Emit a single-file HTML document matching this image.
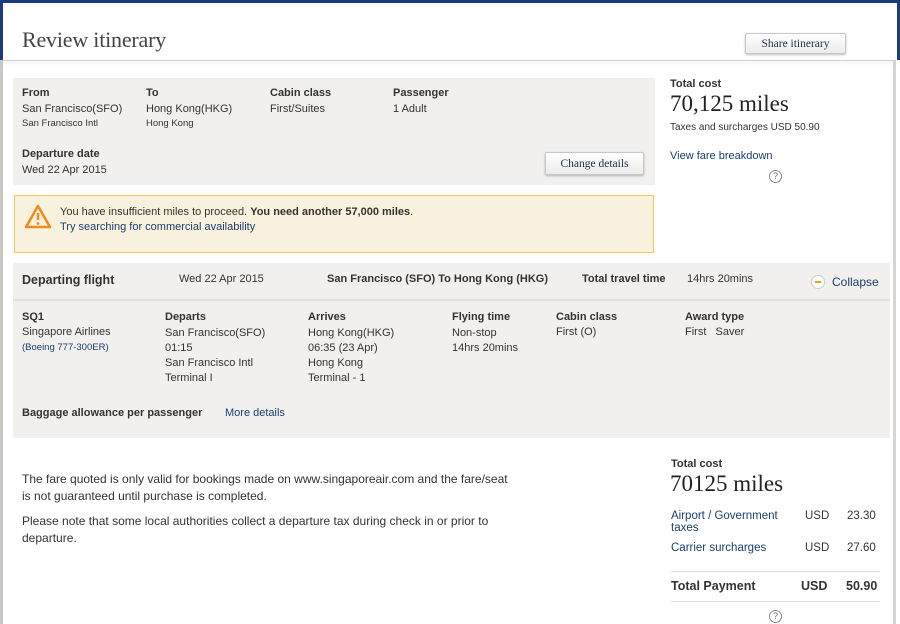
<!DOCTYPE html>
<html><head><style>
*{margin:0;padding:0;box-sizing:border-box}
body{width:900px;height:624px;overflow:hidden;background:#fff;font-family:"Liberation Sans",sans-serif;font-size:11px;color:#333;position:relative}
.a{position:absolute;white-space:nowrap}
.b{font-weight:bold}
.l{color:#1c3d6e}
.serif{font-family:"Liberation Serif",serif}
.btn{position:absolute;border:1px solid #c8c8c8;border-radius:2px;background:linear-gradient(#fff,#ececec);box-shadow:0 1px 2px rgba(0,0,0,.25);font-family:"Liberation Serif",serif;font-size:11.5px;color:#1f2d48;text-align:center}
</style></head><body>
<div class="a" style="left:0;top:0;width:900px;height:3px;background:#1b3a80"></div>
<div class="a" style="left:0;top:0;width:3px;height:60px;background:#1b3a80"></div>
<div class="a" style="left:897px;top:0;width:3px;height:60px;background:#1b3a80"></div>
<div class="a" style="left:0;top:60px;width:3px;height:564px;background:#c9c7c4"></div>
<div class="a" style="left:893px;top:60px;width:3px;height:564px;background:#d6d5d3"></div>
<div class="a" style="left:3px;top:60px;width:890px;height:1px;background:#cfcfcf;box-shadow:0 2px 3px rgba(0,0,0,.12)"></div>
<div class="a serif" style="left:22px;top:27px;font-size:22px;color:#444;letter-spacing:-0.2px">Review itinerary</div>
<div class="btn" style="left:745px;top:33px;width:101px;height:21px;line-height:20px">Share itinerary</div>

<div class="a" style="left:13px;top:78px;width:642px;height:107px;background:#f1f0ee"></div>
<div class="a b" style="left:22px;top:87px">From</div>
<div class="a" style="left:22px;top:103px">San Francisco(SFO)</div>
<div class="a" style="left:22px;top:118px;font-size:9.5px">San Francisco Intl</div>
<div class="a b" style="left:146px;top:87px">To</div>
<div class="a" style="left:146px;top:103px">Hong Kong(HKG)</div>
<div class="a" style="left:146px;top:118px;font-size:9.5px">Hong Kong</div>
<div class="a b" style="left:270px;top:87px">Cabin class</div>
<div class="a" style="left:270px;top:103px">First/Suites</div>
<div class="a b" style="left:393px;top:87px">Passenger</div>
<div class="a" style="left:393px;top:103px">1 Adult</div>
<div class="a b" style="left:22px;top:148px">Departure date</div>
<div class="a" style="left:22px;top:164px">Wed 22 Apr 2015</div>
<div class="btn" style="left:545px;top:152px;width:99px;height:23px;line-height:22px">Change details</div>

<div class="a" style="left:14px;top:195px;width:640px;height:58px;background:#f8f1dd;border:1px solid #f4c660"></div>
<svg class="a" style="left:24px;top:204px" width="28" height="26" viewBox="0 0 28 26"><path d="M14 2 L26 23 H2 Z" fill="none" stroke="#f08a1c" stroke-width="2.5" stroke-linejoin="round"/><path d="M14 9 V16" stroke="#f08a1c" stroke-width="2.5"/><circle cx="14" cy="19.5" r="1.4" fill="#f08a1c"/></svg>
<div class="a" style="left:60px;top:206px">You have insufficient miles to proceed. <b>You need another 57,000 miles</b>.</div>
<div class="a l" style="left:60px;top:221px">Try searching for commercial availability</div>

<div class="a b" style="left:670px;top:78px">Total cost</div>
<div class="a serif" style="left:670px;top:91px;font-size:23px;color:#222">70,125 miles</div>
<div class="a" style="left:670px;top:122px;font-size:10px">Taxes and surcharges USD 50.90</div>
<div class="a l" style="left:670px;top:150px">View fare breakdown</div>
<div class="a" style="left:769px;top:170px;width:13px;height:13px;border:1px solid #888;border-radius:50%;font-size:9px;line-height:11px;text-align:center;color:#666">?</div>

<div class="a" style="left:13px;top:263px;width:877px;height:175px;background:#f1f0ee"></div>
<div class="a" style="left:13px;top:299px;width:877px;height:2px;background:#e2e1df"></div>
<div class="a b" style="left:22px;top:273px;font-size:12.5px">Departing flight</div>
<div class="a" style="left:179px;top:273px">Wed 22 Apr 2015</div>
<div class="a b" style="left:327px;top:273px">San Francisco (SFO) To Hong Kong (HKG)</div>
<div class="a b" style="left:582px;top:273px">Total travel time</div>
<div class="a" style="left:687px;top:273px">14hrs 20mins</div>
<div class="a" style="left:811px;top:275px;width:14px;height:14px;border-radius:50%;background:#fff;border:1px solid #ccc"><div style="position:absolute;left:3px;top:5px;width:6px;height:2px;background:#f39c12"></div></div>
<div class="a l" style="left:832px;top:275px;font-size:12px">Collapse</div>

<div class="a b" style="left:22px;top:311px">SQ1</div>
<div class="a" style="left:22px;top:326px">Singapore Airlines</div>
<div class="a l" style="left:22px;top:342px;font-size:9.5px">(Boeing 777-300ER)</div>
<div class="a b" style="left:165px;top:311px">Departs</div>
<div class="a" style="left:165px;top:326px;line-height:15px">San Francisco(SFO)<br>01:15<br>San Francisco Intl<br>Terminal I</div>
<div class="a b" style="left:308px;top:311px">Arrives</div>
<div class="a" style="left:308px;top:326px;line-height:15px">Hong Kong(HKG)<br>06:35 (23 Apr)<br>Hong Kong<br>Terminal - 1</div>
<div class="a b" style="left:452px;top:311px">Flying time</div>
<div class="a" style="left:452px;top:326px;line-height:15px">Non-stop<br>14hrs 20mins</div>
<div class="a b" style="left:556px;top:311px">Cabin class</div>
<div class="a" style="left:556px;top:326px">First (O)</div>
<div class="a b" style="left:685px;top:311px">Award type</div>
<div class="a" style="left:685px;top:326px">First&nbsp;&nbsp; Saver</div>
<div class="a b" style="left:22px;top:407px">Baggage allowance per passenger</div>
<div class="a l" style="left:225px;top:407px">More details</div>

<div class="a" style="left:22px;top:471px;line-height:17px;font-size:12px">The fare quoted is only valid for bookings made on www.singaporeair.com and the fare/seat<br>is not guaranteed until purchase is completed.</div>
<div class="a" style="left:22px;top:513px;line-height:17px;font-size:12px">Please note that some local authorities collect a departure tax during check in or prior to<br>departure.</div>

<div class="a b" style="left:671px;top:458px">Total cost</div>
<div class="a serif" style="left:670px;top:471px;font-size:23px;color:#222">70125 miles</div>
<div class="a l" style="left:671px;top:510px;line-height:12px;font-size:11.5px">Airport / Government<br>taxes</div>
<div class="a" style="left:805px;top:510px;font-size:11.5px">USD</div>
<div class="a" style="left:847px;top:510px;font-size:11.5px">23.30</div>
<div class="a l" style="left:671px;top:542px;font-size:11.5px">Carrier surcharges</div>
<div class="a" style="left:805px;top:542px;font-size:11.5px">USD</div>
<div class="a" style="left:847px;top:542px;font-size:11.5px">27.60</div>
<div class="a" style="left:671px;top:571px;width:209px;height:1px;background:#ddd"></div>
<div class="a b" style="left:671px;top:579px;font-size:12.5px">Total Payment</div>
<div class="a b" style="left:801px;top:579px;font-size:12.5px">USD</div>
<div class="a b" style="left:846px;top:579px;font-size:12.5px">50.90</div>
<div class="a" style="left:671px;top:601px;width:209px;height:1px;background:#ddd"></div>
<div class="a" style="left:769px;top:610px;width:13px;height:13px;border:1px solid #888;border-radius:50%;font-size:9px;line-height:11px;text-align:center;color:#666">?</div>
</body></html>
